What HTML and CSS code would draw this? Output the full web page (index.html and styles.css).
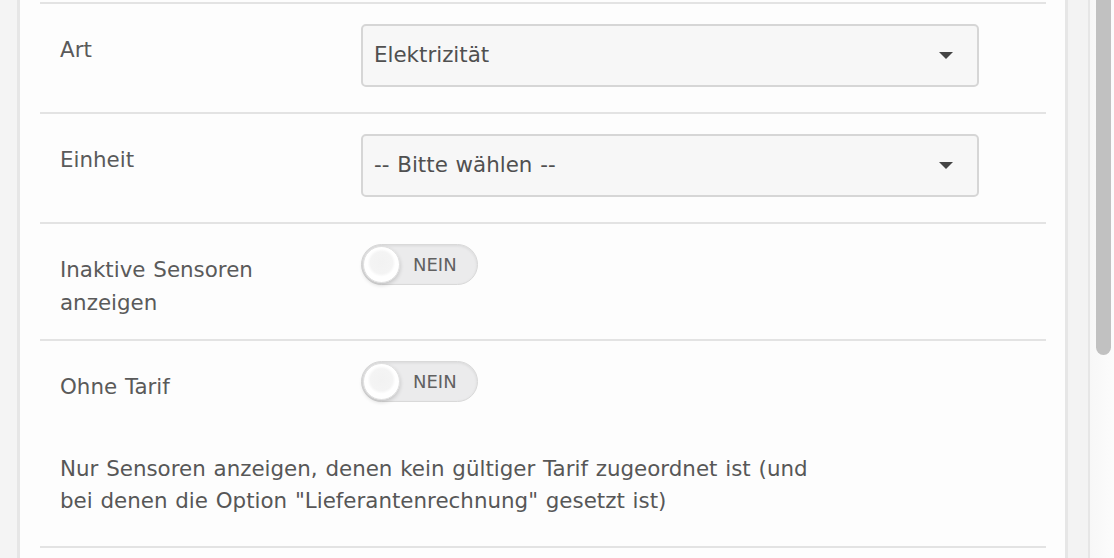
FILE: index.html
```html
<!DOCTYPE html>
<html lang="de">
<head>
<meta charset="utf-8">
<title>Sensoren</title>
<link rel="stylesheet" href="styles.css">
</head>
<body>
<div class="page">
  <div class="gutter-left"></div>
  <main class="panel">
    <div class="form">
      <div class="row">
        <div class="label">Art</div>
        <div class="control">
          <div class="select"><span class="select-value">Elektrizität</span><span class="caret"></span></div>
        </div>
      </div>
      <div class="row">
        <div class="label">Einheit</div>
        <div class="control">
          <div class="select"><span class="select-value">-- Bitte wählen --</span><span class="caret"></span></div>
        </div>
      </div>
      <div class="row">
        <div class="label">Inaktive Sensoren anzeigen</div>
        <div class="control">
          <div class="toggle"><span class="knob"></span><span class="toggle-text">NEIN</span></div>
        </div>
      </div>
      <div class="row">
        <div class="label">Ohne Tarif</div>
        <div class="control">
          <div class="toggle"><span class="knob"></span><span class="toggle-text">NEIN</span></div>
        </div>
        <p class="help">Nur Sensoren anzeigen, denen kein gültiger Tarif zugeordnet ist (und bei denen die Option "Lieferantenrechnung" gesetzt ist)</p>
      </div>
      <div class="row row-end"></div>
    </div>
  </main>
  <div class="gutter-right"></div>
  <div class="scrollbar"><div class="thumb"></div></div>
</div>
</body>
</html>
```

FILE: styles.css
```css
html, body {
  margin: 0;
  padding: 0;
}

body {
  font-family: "DejaVu Sans", "Noto Sans", sans-serif;
  font-size: 21.4px;
  line-height: 32.5px;
  word-spacing: 1px;
  color: #575757;
  background: #fdfdfd;
}

.page {
  display: flex;
  height: 558px;
  overflow: hidden;
}

.gutter-left {
  width: 17px;
  flex: 0 0 17px;
  background: #f4f4f4;
  border-right: 3px solid #e6e6e6;
}

.panel {
  flex: 1;
  background: #fdfdfd;
  padding: 0 19px 0 20px;
}

.form {
  margin-top: 2px;
}

.row {
  display: grid;
  grid-template-columns: 321px 618px;
  border-top: 2px solid #e3e3e3;
  padding: 20px 0;
}

.row-end {
  padding: 0;
  height: 20px;
}

.label {
  padding: 10px 40px 0 20px;
  color: #5a5a5a;
}

.select {
  box-sizing: border-box;
  height: 63px;
  margin-bottom: 5px;
  display: flex;
  align-items: center;
  justify-content: space-between;
  padding: 0 24px 0 11px;
  background: #f7f7f7;
  border: 2px solid #d6d6d6;
  border-radius: 5px;
  color: #505050;
}

.caret {
  width: 0;
  height: 0;
  border-left: 7px solid transparent;
  border-right: 7px solid transparent;
  border-top: 7px solid #444;
}

.toggle {
  box-sizing: border-box;
  width: 117px;
  height: 41px;
  display: flex;
  align-items: center;
  padding: 0 1px;
  border-radius: 21px;
  background: #ebebec;
  border: 1px solid #d9d9d9;
  box-shadow: inset 0 1px 3px rgba(0, 0, 0, 0.08);
}

.knob {
  box-sizing: border-box;
  width: 37px;
  height: 37px;
  flex: 0 0 37px;
  border-radius: 50%;
  border: 1px solid #e0e0e0;
  background: radial-gradient(circle at 50% 45%, #f2f2f2 0, #f4f4f4 11px, #ffffff 14px);
  box-shadow: 0 2px 4px rgba(0, 0, 0, 0.18);
}

.toggle-text {
  margin-left: 13px;
  font-size: 18px;
  line-height: 20px;
  word-spacing: 0;
  color: #616161;
}

.help {
  grid-column: 1 / -1;
  margin: 49px 0 8px;
  padding-left: 20px;
  max-width: 765px;
  color: #575757;
}

.gutter-right {
  width: 20px;
  flex: 0 0 20px;
  background: #f3f3f3;
  border-left: 3px solid #e6e6e6;
  border-right: 2px solid #e6e6e6;
}

.scrollbar {
  flex: 0 0 24px;
  width: 24px;
  box-sizing: border-box;
  padding-left: 6px;
  background: linear-gradient(to right, #f7f7f7, #fcfcfc);
}

.thumb {
  width: 15px;
  height: 355px;
  background: #c1c1c1;
  border-radius: 0 0 8px 8px;
}
```
